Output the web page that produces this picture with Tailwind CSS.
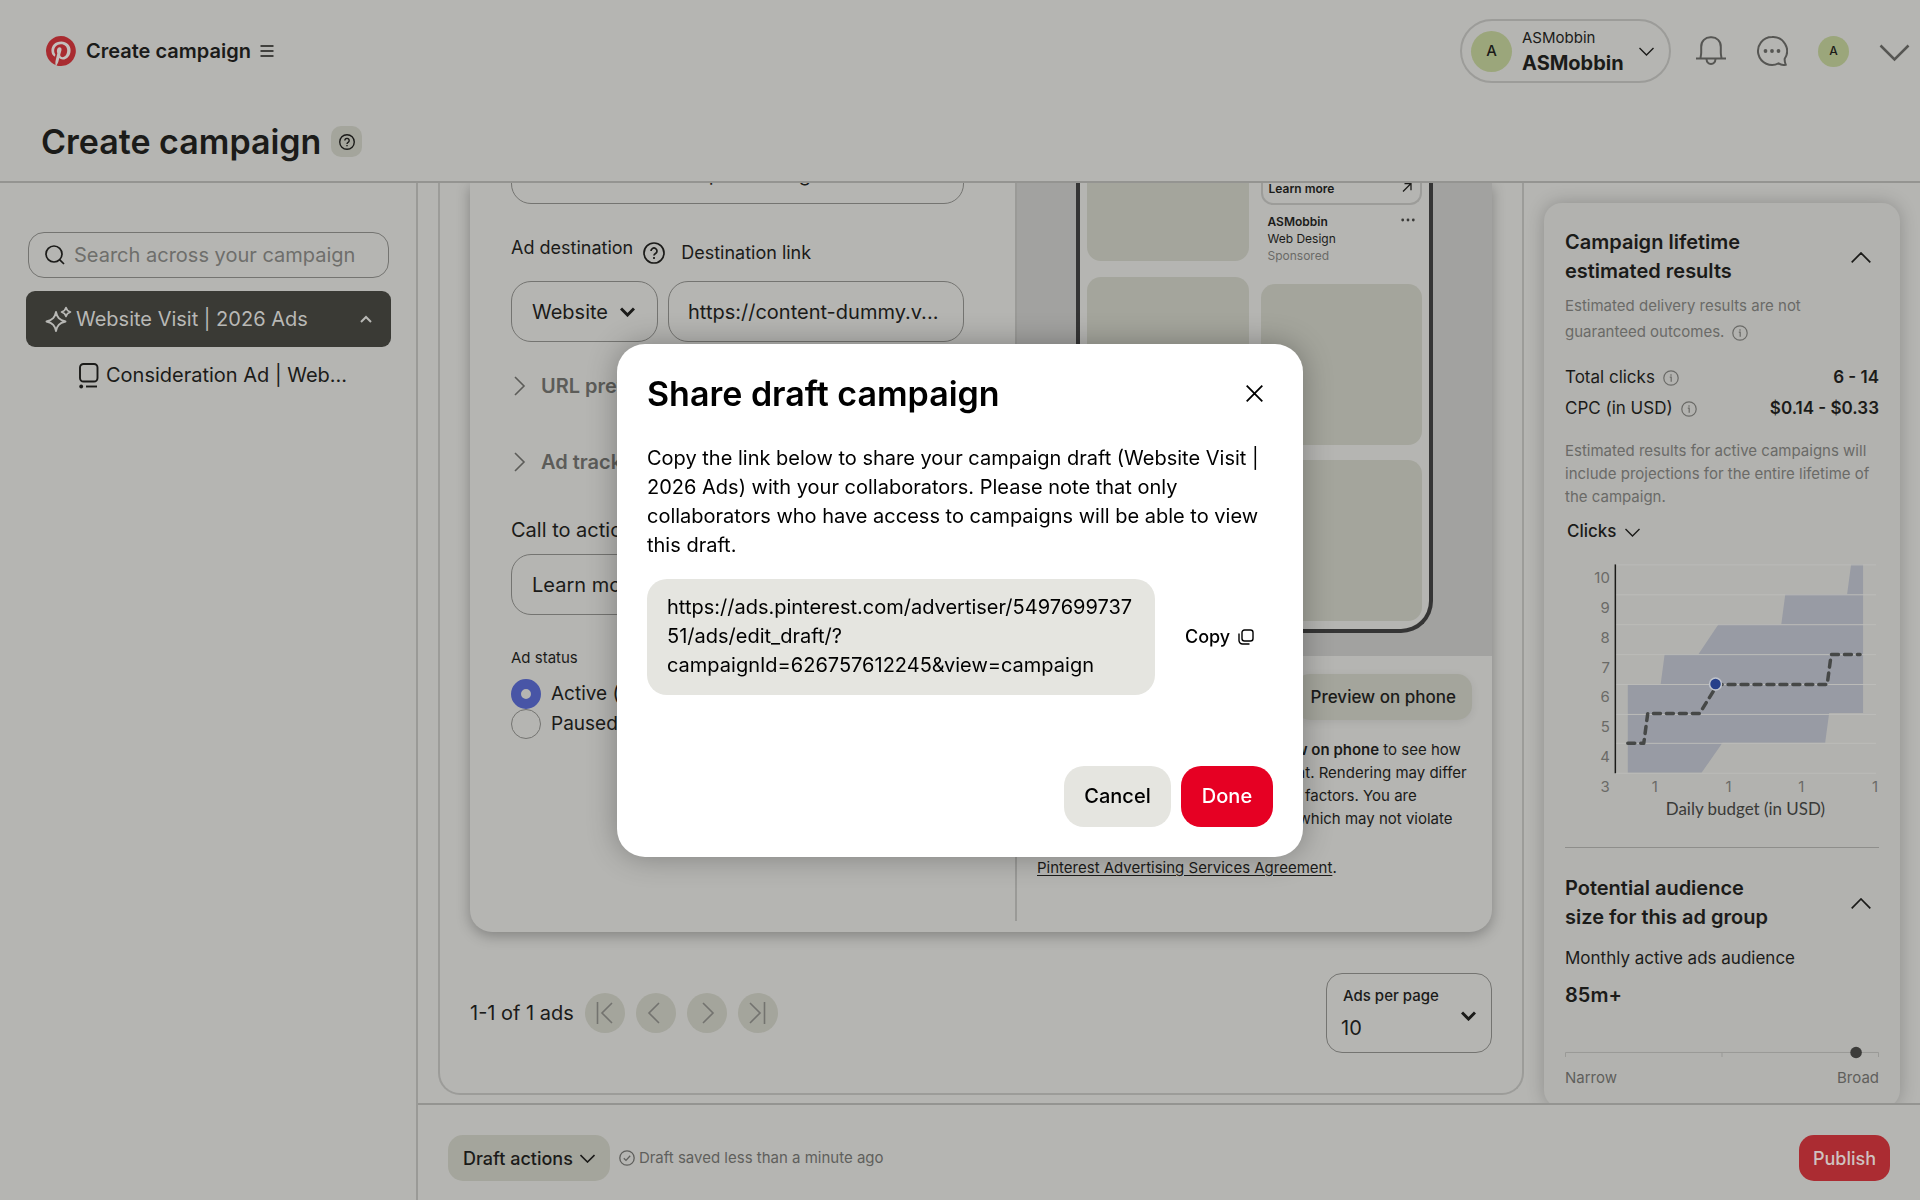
<!DOCTYPE html>
<html lang="en">
<head>
    <meta charset="UTF-8">
    <meta name="viewport" content="width=device-width, initial-scale=1.0">
    <title>Create campaign</title>
    <script src="https://cdn.jsdelivr.net/npm/@tailwindcss/browser@4"></script>
</head>
<body class="h-screen overflow-hidden flex flex-col bg-[#b5b5b2] text-[#1b1b19] font-['Inter',sans-serif] text-[20px]">

    <!-- Top bar -->
    <header class="shrink-0 border-b-2 border-[#949491]">
        <div class="h-[102px] flex items-center justify-between pl-[46px] pr-[10px]">
            <div class="flex items-center">
                <svg class="size-[30px]" viewBox="0 0 24 24"><circle cx="12" cy="12" r="11.5" fill="#c4c0bd"/><path fill="#a92b30" d="M12 0a12 12 0 0 0-4.37 23.17c-.1-.95-.2-2.4.04-3.44l1.4-5.96s-.35-.72-.35-1.78c0-1.67.97-2.91 2.17-2.91 1.02 0 1.52.77 1.52 1.69 0 1.03-.66 2.57-1 4-.28 1.19.6 2.17 1.78 2.17 2.13 0 3.77-2.25 3.77-5.5 0-2.87-2.06-4.88-5.01-4.88-3.42 0-5.42 2.56-5.42 5.2 0 1.04.4 2.15.9 2.75.1.12.11.22.08.35l-.34 1.36c-.05.22-.17.27-.4.16-1.5-.7-2.43-2.88-2.43-4.65 0-3.78 2.75-7.25 7.92-7.25 4.16 0 7.4 2.97 7.4 6.93 0 4.13-2.61 7.46-6.23 7.46-1.21 0-2.36-.63-2.75-1.38l-.75 2.85c-.27 1.05-1 2.36-1.49 3.16A12 12 0 1 0 12 0z"/></svg>
                <span class="ml-[10px] font-semibold">Create campaign</span>
                <button aria-label="Menu" class="ml-[9px]">
                    <svg class="size-[14px]" viewBox="0 0 14 14" fill="none" stroke="#1b1b19" stroke-width="1.3"><path d="M0.5 2h13M0.5 7h13M0.5 12h13"/></svg>
                </button>
            </div>
            <div class="flex items-center">
                <button class="h-[64px] w-[211px] flex items-center rounded-full border-2 border-[#9c9c99] pl-[9px] text-left">
                    <span class="size-[41px] rounded-full bg-[#9ba67b] flex items-center justify-center text-[15px] font-medium">A</span>
                    <span class="ml-[10px] pb-[2px] flex flex-col">
                        <span class="text-[15px] leading-[25px]">ASMobbin</span>
                        <span class="leading-[26px] font-bold">ASMobbin</span>
                    </span>
                    <svg class="ml-[15px] w-[15px] h-[9px]" viewBox="0 0 15 9" fill="none" stroke="#1b1b19" stroke-width="1.4"><path d="M0.5 1l7 7 7-7"/></svg>
                </button>
                <button aria-label="Notifications" class="ml-[24px]">
                    <svg class="size-[32px]" viewBox="0 0 32 32" fill="none" stroke="#565653" stroke-width="2"><path d="M1 23.500h30M5.500 23.500c0-2 .7-3 .7-6V12a9.200 9.200 0 0 1 9.800-9.800A9.200 9.200 0 0 1 25.800 12v5.500c0 3 .7 4 .7 6"/><path d="M11.500 24c.5 6.500 8.500 6.500 9 0" /></svg>
                </button>
                <button aria-label="Messages" class="ml-[29px]">
                    <svg class="size-[32px]" viewBox="0 0 32 32" fill="none" stroke="#565653" stroke-width="2"><path d="M16 2a14 14 0 1 0 6.500 26.400c2 1.400 5 1.900 7.200 1.300-.8-1.800-1.200-3.500-1-6A14 14 0 0 0 16 2z"/><g fill="#565653" stroke="none"><circle cx="9.500" cy="16" r="1.900"/><circle cx="16" cy="16" r="1.900"/><circle cx="22.500" cy="16" r="1.900"/></g></svg>
                </button>
                <button class="ml-[30px] size-[31px] rounded-full bg-[#9ba67b] flex items-center justify-center text-[12px] font-medium">A</button>
                <button aria-label="More accounts" class="ml-[30px] pt-[3px]">
                    <svg class="w-[31px] h-[18px]" viewBox="0 0 31 18" fill="none" stroke="#565653" stroke-width="2.500"><path d="M1.500 1.500l14 14 14-14"/></svg>
                </button>
            </div>
        </div>
        <div class="h-[79px] flex items-center pl-[41px]">
            <h1 class="text-[34px] font-semibold leading-[40px]">Create campaign</h1>
            <button aria-label="Help" class="ml-[10px] size-[31px] rounded-[10px] bg-[#a4a59c] flex items-center justify-center">
                <svg class="size-[16px]" viewBox="0 0 22 22" fill="none" stroke="#1b1b19" stroke-width="1.900"><circle cx="11" cy="11" r="10"/><path d="M8 9a3 3 0 1 1 4.500 2.600c-1 .6-1.500 1-1.500 2"/><path d="M11 15v2"/></svg>
            </button>
        </div>
    </header>

    <div class="flex-1 min-h-0 flex">
        <!-- Campaign tree -->
        <aside class="w-[418px] shrink-0 border-r-2 border-[#9a9a97] pt-[49px] pl-[26px] pr-[25px]">
            <div class="mx-[2px] h-[46px] flex items-center rounded-[16px] border border-[#747471] px-[16px]">
                <svg class="size-[20px] shrink-0" viewBox="0 0 20 20" fill="none" stroke="#1b1b19" stroke-width="1.700"><circle cx="9" cy="9" r="8"/><path d="M14.800 14.800L19 19"/></svg>
                <input type="text" aria-label="Search across your campaign" placeholder="Search across your campaign" class="ml-[9px] w-full min-w-0 bg-transparent outline-none placeholder:text-[#6e6e6b]">
            </div>
            <button class="mt-[13px] w-full h-[56px] flex items-center rounded-[9px] bg-[#3a3a35] text-[#b8b8b5] pl-[19px] pr-[19px] text-left">
                <svg class="size-[27px]" viewBox="0 0 27 27" fill="none" stroke="#b8b8b5" stroke-width="1.900" stroke-linejoin="round"><path d="M11 6c1.200 5.500 3 7.800 9.500 9.500-6.500 1.700-8.300 4-9.500 9.500-1.200-5.500-3-7.800-9.500-9.500C8 13.800 9.800 11.500 11 6z"/><path stroke-width="1.600" d="M21 1.500c.6 2.600 1.400 3.700 4.500 4.500-3.100.8-3.900 1.900-4.500 4.500-.6-2.600-1.400-3.700-4.500-4.500 3.100-.8 3.900-1.900 4.500-4.500z"/></svg>
                <span class="ml-[4px] flex-1">Website Visit | 2026 Ads</span>
                <svg class="w-[12px] h-[8px]" viewBox="0 0 12 8" fill="none" stroke="#b8b8b5" stroke-width="2"><path d="M1 7l5-5 5 5"/></svg>
            </button>
            <button class="mt-[12px] ml-[52px] h-[32px] flex items-center text-left">
                <svg class="w-[21px] h-[27px]" viewBox="0 0 21 27" fill="none" stroke="#1b1b19" stroke-width="1.900"><rect x="2" y="2" width="17.500" height="17.500" rx="3.500"/><path d="M8 24.500h11"/><circle cx="3.200" cy="24.500" r="1.900" fill="#1b1b19" stroke="none"/></svg>
                <span class="ml-[7px]">Consideration Ad | Web...</span>
            </button>
        </aside>

        <div class="flex-1 min-w-0 flex flex-col">
            <div class="flex-1 min-h-0 flex overflow-hidden">
                <!-- Ads form -->
                <main class="flex-1 min-w-0 pl-[20px] pr-[20px]">
                    <div class="border-2 border-t-0 border-[#9c9c99] rounded-b-[22px] px-[30px] h-[912px]">
                        <section class="h-[749px] flex rounded-b-[22px] bg-[#b5b5b2] shadow-[0_4px_14px_rgba(0,0,0,0.28)]">
                            <div class="w-[547px] h-[738px] border-r-2 border-[#9a9a97] pl-[41px] pr-[51px]">
                                <input type="text" aria-label="Ad description" value="Find websites and plain design" class="block -mt-[40px] w-full h-[61px] rounded-[20px] border border-[#747471] px-[20px] bg-transparent">
                                <div class="mt-[32px] flex text-[18px] leading-[24px]">
                                    <label for="adDestination">Ad destination</label>
                                    <svg class="mt-[6px] ml-[10px] size-[22px]" viewBox="0 0 22 22" fill="none" stroke="#1b1b19" stroke-width="1.700"><circle cx="11" cy="11" r="10"/><path d="M8 9a3 3 0 1 1 4.500 2.600c-1 .6-1.500 1-1.500 2"/><path d="M11 15v2"/></svg>
                                    <label for="destinationLink" class="mt-[5px] ml-[16px]">Destination link</label>
                                </div>
                                <div class="mt-[16px] flex gap-[10px]">
                                    <div class="relative w-[147px] h-[61px]">
                                        <select id="adDestination" class="appearance-none w-full h-full rounded-[20px] border border-[#747471] pl-[20px] bg-transparent"><option>Website</option></select>
                                        <svg class="absolute right-[23px] top-[26px] w-[15px] h-[10px] pointer-events-none" viewBox="0 0 15 10" fill="none" stroke="#1b1b19" stroke-width="3"><path d="M1 1.500l6.500 6.500L14 1.500"/></svg>
                                    </div>
                                    <input id="destinationLink" type="text" value="https://content-dummy.v..." class="flex-1 min-w-0 h-[61px] rounded-[20px] border border-[#747471] px-[19px] bg-transparent">
                                </div>
                                <button class="mt-[30px] h-[28px] flex items-center font-semibold text-[#5c5c59]">
                                    <svg class="ml-[2px] w-[13px] h-[20px]" viewBox="0 0 13 20" fill="none" stroke="#5c5c59" stroke-width="1.600"><path d="M2 1l9 9-9 9"/></svg>
                                    <span class="ml-[15px]">URL preview</span>
                                </button>
                                <button class="mt-[48px] h-[28px] flex items-center font-semibold text-[#5c5c59]">
                                    <svg class="ml-[2px] w-[13px] h-[20px]" viewBox="0 0 13 20" fill="none" stroke="#5c5c59" stroke-width="1.600"><path d="M2 1l9 9-9 9"/></svg>
                                    <span class="ml-[15px]">Ad tracking</span>
                                </button>
                                <label for="callToAction" class="mt-[40px] block leading-[28px]">Call to action</label>
                                <select id="callToAction" class="mt-[10px] appearance-none block w-full h-[61px] rounded-[20px] border border-[#747471] pl-[20px] bg-transparent"><option>Learn more</option></select>
                                <fieldset class="mt-[31px] text-[19px]">
                                    <legend class="text-[15px] leading-[24px] mb-[9px]">Ad status</legend>
                                    <label class="h-[30px] flex items-center gap-[10px]">
                                        <input type="radio" name="adStatus" checked class="appearance-none size-[30px] rounded-full border border-[#747471] checked:border-[10px] checked:border-[#4855a6]">
                                        Active (on launch)
                                    </label>
                                    <label class="h-[30px] flex items-center gap-[10px]">
                                        <input type="radio" name="adStatus" class="appearance-none size-[30px] rounded-full border border-[#747471] checked:border-[10px] checked:border-[#4855a6]">
                                        Paused
                                    </label>
                                </fieldset>
                            </div>

                            <!-- Ad preview -->
                            <div class="flex-1 min-w-0">
                                <div class="h-[473px] bg-[#a2a2a0] flex justify-center items-start overflow-hidden">
                                    <div class="w-[357px] h-[450px] border-4 border-t-0 border-[#353535] rounded-b-[32px] bg-[#b5b5b2] px-[7px] grid grid-cols-2 gap-x-[12px]">
                                        <div class="flex flex-col gap-[16px]">
                                            <div class="h-[78px] rounded-b-[14px] bg-[#a4a59c]"></div>
                                            <div class="h-[161px] rounded-[14px] bg-[#a4a59c]"></div>
                                            <div class="h-[161px] rounded-[14px] bg-[#a4a59c]"></div>
                                        </div>
                                        <div class="flex flex-col text-[12px]">
                                            <div class="h-[22px] flex items-start justify-between border-2 border-t-0 border-[#9c9c99] rounded-b-[12px] px-[6px]">
                                                <span class="font-semibold leading-[12px]">Learn more</span>
                                                <svg class="size-[10px] mr-[2px]" viewBox="0 0 10 10" fill="none" stroke="#1b1b19" stroke-width="1.300"><path d="M1 8.500l8-8M2.500 .7H9v6.500"/></svg>
                                            </div>
                                            <div class="mt-[8px] flex items-start justify-between px-[7px] leading-[17px]">
                                                <div>
                                                    <p class="font-semibold">ASMobbin</p>
                                                    <p>Web Design</p>
                                                    <p class="text-[#6a6a67]">Sponsored</p>
                                                </div>
                                                <svg class="mt-[5px] w-[14px] h-[4px]" viewBox="0 0 14 4" fill="#3a3a38"><circle cx="1.700" cy="2" r="1.400"/><circle cx="7" cy="2" r="1.400"/><circle cx="12.300" cy="2" r="1.400"/></svg>
                                            </div>
                                            <div class="mt-[20px] h-[161px] rounded-[14px] bg-[#a4a59c]"></div>
                                            <div class="mt-[15px] h-[161px] rounded-[14px] bg-[#a4a59c]"></div>
                                        </div>
                                    </div>
                                </div>
                                <div class="pl-[20px] pr-[20px] pt-[18px] text-[15px] leading-[23px]">
                                    <div class="flex justify-end">
                                        <button class="h-[46px] px-[16px] rounded-[15px] bg-[#a4a59c] text-[17px] font-medium shadow-[0_2px_8px_rgba(0,0,0,0.08)]">Preview on phone</button>
                                    </div>
                                    <p class="mt-[18px] whitespace-nowrap">This is an example only. Click <b class="font-semibold">Preview on phone</b> to see how<br>your ads will look in the final ad format. Rendering may differ<br>based on a device, language or other factors. You are<br>responsible for the content of an ad, which may not violate</p>
                                    <p class="mt-[26px]"><a href="#" class="underline underline-offset-2">Pinterest Advertising Services Agreement</a>.</p>
                                </div>
                            </div>
                        </section>

                        <div class="mt-[40px] h-[81px] flex items-center justify-between">
                            <div class="flex items-center gap-[11px]">
                                <span>1-1 of 1 ads</span>
                                <button aria-label="First page" class="size-[40px] rounded-full bg-[#a4a59c] flex items-center justify-center"><svg class="w-[17px] h-[22px]" viewBox="0 0 17 22" fill="none" stroke="#73736f" stroke-width="1.600"><path d="M1.500 0v22M16 1L6 11l10 10"/></svg></button>
                                <button aria-label="Previous page" class="size-[40px] rounded-full bg-[#a4a59c] flex items-center justify-center"><svg class="w-[17px] h-[22px]" viewBox="0 0 17 22" fill="none" stroke="#73736f" stroke-width="1.600"><path d="M12 1L2 11l10 10"/></svg></button>
                                <button aria-label="Next page" class="size-[40px] rounded-full bg-[#a4a59c] flex items-center justify-center"><svg class="w-[17px] h-[22px]" viewBox="0 0 17 22" fill="none" stroke="#73736f" stroke-width="1.600"><path d="M5 1l10 10L5 21"/></svg></button>
                                <button aria-label="Last page" class="size-[40px] rounded-full bg-[#a4a59c] flex items-center justify-center"><svg class="w-[17px] h-[22px]" viewBox="0 0 17 22" fill="none" stroke="#73736f" stroke-width="1.600"><path d="M15.500 0v22M1 1l10 10L1 21"/></svg></button>
                            </div>
                            <div class="relative w-[166px] h-[80px]">
                                <label for="adsPerPage" class="absolute left-[17px] top-[13px] text-[15px] leading-[20px] font-medium">Ads per page</label>
                                <select id="adsPerPage" class="appearance-none w-full h-full rounded-[16px] border border-[#747471] pl-[14px] pt-[30px] bg-transparent"><option>10</option></select>
                                <svg class="absolute right-[16px] top-[38px] w-[15px] h-[10px] pointer-events-none" viewBox="0 0 15 10" fill="none" stroke="#1b1b19" stroke-width="3"><path d="M1 1.500l6.500 6.500L14 1.500"/></svg>
                            </div>
                        </div>
                    </div>
                </main>

                <!-- Estimates -->
                <aside class="w-[376px] shrink-0 pt-[20px] pr-[20px]">
                    <div class="h-[905px] rounded-[18px] bg-[#b2b2af] shadow-[0_0_18px_rgba(0,0,0,0.22)] px-[21px] pt-[25px]">
                        <div class="flex items-center justify-between pr-[8px]">
                            <h2 class="font-semibold leading-[29px]">Campaign lifetime<br>estimated results</h2>
                            <button aria-label="Collapse estimated results"><svg class="w-[20px] h-[11px]" viewBox="0 0 20 11" fill="none" stroke="#1b1b19" stroke-width="1.700"><path d="M.7 10.300L10 1l9.300 9.300"/></svg></button>
                        </div>
                        <p class="mt-[7px] text-[15px] leading-[26px] text-[#6a6a67]">Estimated delivery results are not<br>guaranteed outcomes. <svg class="inline ml-[3px] size-[16px]" viewBox="0 0 16 16" fill="none" stroke="#6a6a67" stroke-width="1.200"><circle cx="8" cy="8" r="7.200"/><path d="M6.800 7.200h1.400v4.500M8 4.300v1.400"/></svg></p>
                        <dl class="mt-[17px] text-[17px]">
                            <div class="h-[31px] flex items-center justify-between">
                                <dt class="flex items-center gap-[8px]">Total clicks <svg class="size-[16px]" viewBox="0 0 16 16" fill="none" stroke="#6a6a67" stroke-width="1.200"><circle cx="8" cy="8" r="7.200"/><path d="M6.800 7.200h1.400v4.500M8 4.300v1.400"/></svg></dt>
                                <dd class="font-semibold">6 - 14</dd>
                            </div>
                            <div class="h-[31px] flex items-center justify-between">
                                <dt class="flex items-center gap-[8px]">CPC (in USD) <svg class="size-[16px]" viewBox="0 0 16 16" fill="none" stroke="#6a6a67" stroke-width="1.200"><circle cx="8" cy="8" r="7.200"/><path d="M6.800 7.200h1.400v4.500M8 4.300v1.400"/></svg></dt>
                                <dd class="font-semibold">$0.14 - $0.33</dd>
                            </div>
                        </dl>
                        <p class="mt-[15px] text-[15px] leading-[23px] text-[#6a6a67] whitespace-nowrap">Estimated results for active campaigns will<br>include projections for the entire lifetime of<br>the campaign.</p>
                        <button class="mt-[12px] ml-[2px] h-[24px] flex items-center gap-[8px] text-[17px] font-medium">Clicks <svg class="w-[15px] h-[9px]" viewBox="0 0 15 9" fill="none" stroke="#1b1b19" stroke-width="1.400"><path d="M.5 1l7 7 7-7"/></svg></button>

                        <svg class="mt-[15px] w-full h-[266px] overflow-visible" viewBox="0 0 315 266">
                            <path fill="#989ba4" d="M63 125h33l4-30h34l20-30h63l4-30h62l4-30h12v149h-34l-4 30H158l-21 30H63z"/>
                            <path stroke="#bcbcb9" d="M50 5.500h262M50 35.500h262M50 65.500h262M50 95.500h262M50 125.500h262M50 155.500h262M50 184.500h262M50 214.500h262"/>
                            <path stroke="#1b1b19" stroke-width="1.500" d="M50.500 5v209.500"/>
                            <path fill="none" stroke="#464847" stroke-width="3.500" stroke-linecap="round" stroke-linejoin="round" stroke-dasharray="7 6" d="M63 184.500h16l4-30h52l18-29h110l4-30h29"/>
                            <circle cx="151" cy="125" r="6" fill="#26408a" stroke="#c0c4cc" stroke-width="1.500"/>
                            <g font-family="Inter" font-size="15" fill="#6a6a67" text-anchor="end"><text x="45" y="24">10</text><text x="45" y="54">9</text><text x="45" y="84">8</text><text x="45" y="114">7</text><text x="45" y="143">6</text><text x="45" y="173">5</text><text x="45" y="203">4</text><text x="45" y="233">3</text></g>
                            <g font-family="Inter" font-size="15" fill="#6a6a67" text-anchor="middle"><text x="90" y="233">1</text><text x="164" y="233">1</text><text x="237" y="233">1</text><text x="311" y="233">1</text></g>
                            <text x="181" y="256" font-family="Lato" font-size="17" fill="#3a3a38" text-anchor="middle">Daily budget (in USD)</text>
                        </svg>

                        <hr class="mt-[22px] border-[#8e8e8b]">
                        <div class="mt-[26px] flex items-center justify-between pr-[8px]">
                            <h2 class="font-semibold leading-[29px]">Potential audience<br>size for this ad group</h2>
                            <button aria-label="Collapse audience size"><svg class="w-[20px] h-[11px]" viewBox="0 0 20 11" fill="none" stroke="#1b1b19" stroke-width="1.700"><path d="M.7 10.300L10 1l9.300 9.300"/></svg></button>
                        </div>
                        <p class="mt-[14px] text-[17px] leading-[24px]">Monthly active ads audience</p>
                        <p class="mt-[11px] font-semibold leading-[28px]">85m+</p>
                        <svg class="mt-[36px] w-full h-[14px]" viewBox="0 0 315 14" fill="none" stroke="#9a9a97"><path d="M.5 12V7.500h314V12M157.500 7.500V12"/><circle cx="292" cy="7.500" r="5.800" fill="#3c3c3a" stroke="none"/></svg>
                        <div class="mt-[7px] flex justify-between text-[15px] leading-[24px] text-[#5f5f5c]"><span>Narrow</span><span>Broad</span></div>
                    </div>
                </aside>
            </div>

            <!-- Footer actions -->
            <footer class="shrink-0 h-[97px] border-t-2 border-[#949491] flex items-start justify-between px-[30px] pt-[30px]">
                <div class="flex items-center">
                    <button class="h-[46px] px-[15px] rounded-[15px] bg-[#a4a59c] flex items-center gap-[7px] text-[18px] font-medium">Draft actions <svg class="w-[15px] h-[9px]" viewBox="0 0 15 9" fill="none" stroke="#1b1b19" stroke-width="1.600"><path d="M.5 1l7 7 7-7"/></svg></button>
                    <p class="ml-[9px] flex items-center gap-[4px] text-[15px] text-[#5f5f5c]"><svg class="size-[16px]" viewBox="0 0 16 16" fill="none" stroke="#5f5f5c" stroke-width="1.300"><circle cx="8" cy="8" r="7.200"/><path d="M4.800 8.200L7 10.400l4.200-4.600"/></svg> Draft saved less than a minute ago</p>
                </div>
                <button class="h-[46px] w-[91px] rounded-[15px] bg-[#ab2c32] text-[#cfc2c0] text-[18px] font-medium">Publish</button>
            </footer>
        </div>
    </div>

    <!-- Share dialog -->
    <div class="fixed inset-0 flex items-center justify-center">
        <div role="dialog" aria-labelledby="shareTitle" class="w-[686px] rounded-[28px] bg-white text-black p-[30px] pt-[26px] shadow-[0_0_30px_rgba(0,0,0,0.3)]">
            <div class="h-[48px] flex items-center justify-between">
                <h2 id="shareTitle" class="text-[34px] font-semibold">Share draft campaign</h2>
                <button aria-label="Close" class="mr-[10px]"><svg class="size-[17px]" viewBox="0 0 17 17" fill="none" stroke="#000" stroke-width="1.800"><path d="M.7 .7l15.600 15.600M16.300 .7L.7 16.300"/></svg></button>
            </div>
            <p class="mt-[26px] leading-[29px] whitespace-nowrap">Copy the link below to share your campaign draft (Website Visit |<br>2026 Ads) with your collaborators. Please note that only<br>collaborators who have access to campaigns will be able to view<br>this draft.</p>
            <div class="mt-[19px] flex items-center">
                <p class="w-[508px] h-[116px] rounded-[20px] bg-[#e5e5e0] px-[20px] py-[14px] leading-[29px] whitespace-nowrap">https://ads.pinterest.com/advertiser/5497699737<br>51/ads/edit_draft/?<br>campaignId=626757612245&amp;view=campaign</p>
                <button class="ml-[30px] flex items-center gap-[8px] text-[18px] font-medium">Copy <svg class="size-[16px]" viewBox="0 0 16 16" fill="none" stroke="#000" stroke-width="1.400"><rect x="4" y="1" width="11" height="11" rx="2.500"/><path d="M1 4.500v7A3.500 3.500 0 0 0 4.500 15h7"/></svg></button>
            </div>
            <div class="mt-[71px] flex justify-end gap-[10px] font-medium">
                <button class="w-[107px] h-[61px] rounded-[20px] bg-[#e5e5e0]">Cancel</button>
                <button class="w-[92px] h-[61px] rounded-[20px] bg-[#e60023] text-white">Done</button>
            </div>
        </div>
    </div>
</body>
</html>
